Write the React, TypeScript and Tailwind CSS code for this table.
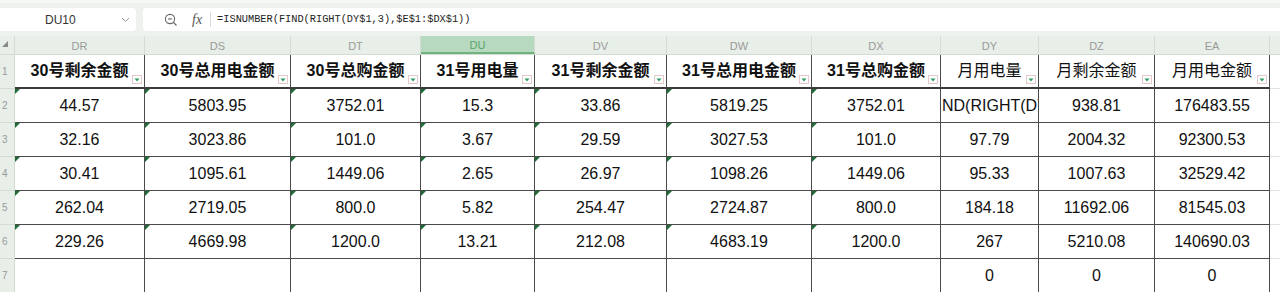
import React from "react";

const widths = [130, 146, 130, 114, 132, 145, 129, 98, 116, 115];
const letters = ["DR", "DS", "DT", "DU", "DV", "DW", "DX", "DY", "DZ", "EA"];
const headers = [
  "30号剩余金额",
  "30号总用电金额",
  "30号总购金额",
  "31号用电量",
  "31号剩余金额",
  "31号总用电金额",
  "31号总购金额",
  "月用电量",
  "月剩余金额",
  "月用电金额",
];
const rows: string[][] = [
  ["44.57", "5803.95", "3752.01", "15.3", "33.86", "5819.25", "3752.01", "__F__", "938.81", "176483.55"],
  ["32.16", "3023.86", "101.0", "3.67", "29.59", "3027.53", "101.0", "97.79", "2004.32", "92300.53"],
  ["30.41", "1095.61", "1449.06", "2.65", "26.97", "1098.26", "1449.06", "95.33", "1007.63", "32529.42"],
  ["262.04", "2719.05", "800.0", "5.82", "254.47", "2724.87", "800.0", "184.18", "11692.06", "81545.03"],
  ["229.26", "4669.98", "1200.0", "13.21", "212.08", "4683.19", "1200.0", "267", "5210.08", "140690.03"],
  ["", "", "", "", "", "", "", "0", "0", "0"],
];

const font = { fontFamily: '"Liberation Sans", "Noto Sans CJK SC", sans-serif' };

function FilterBtn() {
  return (
    <div className="absolute right-[2px] bottom-[3px] w-[10px] h-[9px] bg-white border border-[#e3c9c9] flex items-center justify-center">
      <svg width="6" height="4" viewBox="0 0 6 4">
        <polygon points="0.5,0.5 5.5,0.5 3,3.5" fill="#2f9e63" />
      </svg>
    </div>
  );
}

function Tri() {
  return (
    <svg className="absolute left-0 top-0" width="5" height="5" viewBox="0 0 5 5">
      <polygon points="0,0 5,0 0,5" fill="#1d6b35" />
    </svg>
  );
}

export default function App() {
  return (
    <div className="w-[1280px] h-[292px] overflow-hidden bg-white" style={font}>
      {/* toolbar */}
      <div className="h-[36px] bg-[#eef2ee] flex items-start pt-[8px] border-t-[3px] border-[#f6f8f6]">
        <div className="w-[136px] h-[23px] bg-white rounded-r-[4px] flex items-center relative mt-[-3px]">
          <span className="absolute left-[45px] text-[12px] text-[#333]">DU10</span>
          <svg className="absolute left-[121px]" width="9" height="6" viewBox="0 0 9 6">
            <polyline points="1,1 4.5,4.5 8,1" fill="none" stroke="#999" strokeWidth="1" />
          </svg>
        </div>
        <div className="ml-[7px] flex-1 h-[23px] bg-white rounded-l-[4px] flex items-center mt-[-3px]">
          <svg className="ml-[21px]" width="14" height="14" viewBox="0 0 14 14">
            <circle cx="6" cy="6" r="4.6" fill="none" stroke="#666" strokeWidth="1.1" />
            <line x1="4" y1="6" x2="8" y2="6" stroke="#666" strokeWidth="1.1" />
            <line x1="9.4" y1="9.4" x2="12.5" y2="12.5" stroke="#666" strokeWidth="1.2" />
          </svg>
          <span
            className="ml-[14px] text-[14px] italic text-[#555]"
            style={{ fontFamily: '"Liberation Serif", serif' }}
          >
            fx
          </span>
          <div className="ml-[8px] w-px h-[15px] bg-[#dcdcdc]" />
          <span
            className="ml-[6px] text-[10.3px] text-[#222] whitespace-nowrap"
            style={{ fontFamily: '"Liberation Mono", monospace' }}
          >
            =ISNUMBER(FIND(RIGHT(DY$1,3),$E$1:$DX$1))
          </span>
        </div>
      </div>

      {/* column letters */}
      <div className="flex h-[19px] bg-[#e8eee8] border-b border-[#d3dbd3]">
        <div className="w-[15px] shrink-0 relative border-r border-[#d3dbd3]">
          <svg className="absolute left-[2px] top-[5px]" width="6" height="6" viewBox="0 0 6 6">
            <polygon points="6,0 6,6 0,6" fill="#8a8a8a" />
          </svg>
        </div>
        {letters.map((l, i) => (
          <div
            key={l}
            style={{ width: widths[i] }}
            className={
              l === "DU"
                ? "shrink-0 flex items-center justify-center pt-[2px] text-[11px] bg-[#b7d9bf] text-[#5aa36a] border-r border-[#d3dbd3] border-b-2 border-b-[#6fb47f]"
                : "shrink-0 flex items-center justify-center pt-[2px] text-[11px] text-[#9a9a9a] border-r border-[#d3dbd3]"
            }
          >
            {l}
          </div>
        ))}
        <div className="flex-1" />
      </div>

      {/* row 1 */}
      <div className="flex h-[34px]">
        <div className="w-[15px] shrink-0 bg-[#e8eee8] border-r border-[#d3dbd3] border-b border-b-[#d3dbd3] text-[10px] text-[#9a9a9a] pl-[2px] flex items-center">
          1
        </div>
        {headers.map((h, i) => (
          <div
            key={h}
            style={{ width: widths[i] }}
            className={
              "shrink-0 relative flex items-center justify-center text-[16px] text-[#111] border-r border-[#4a4a4a] border-b-2 border-b-[#3a3a3a] " +
              (i < 7 ? "font-bold" : "font-normal")
            }
          >
            {h}
            <FilterBtn />
          </div>
        ))}
        <div className="flex-1 border-b border-[#e2e2e2]" />
      </div>

      {rows.map((r, ri) => (
        <div key={ri} className="flex h-[34px]">
          <div className="w-[15px] shrink-0 bg-[#e8eee8] border-r border-[#d3dbd3] border-b border-b-[#d3dbd3] text-[10px] text-[#9a9a9a] pl-[2px] flex items-center">
            {ri + 2}
          </div>
          {r.map((v, ci) => (
            <div
              key={ci}
              style={{ width: widths[ci] }}
              className="shrink-0 relative flex items-center justify-center text-[16px] text-[#111] border-r border-b border-[#4a4a4a] overflow-hidden"
            >
              {ri < 5 && ci < 7 && <Tri />}
              {v === "__F__" ? (
                <span className="absolute left-[1px] right-0 overflow-hidden whitespace-nowrap">ND(RIGHT(DY</span>
              ) : (
                v
              )}
            </div>
          ))}
          <div className="flex-1 border-b border-[#e2e2e2]" />
        </div>
      ))}
    </div>
  );
}
